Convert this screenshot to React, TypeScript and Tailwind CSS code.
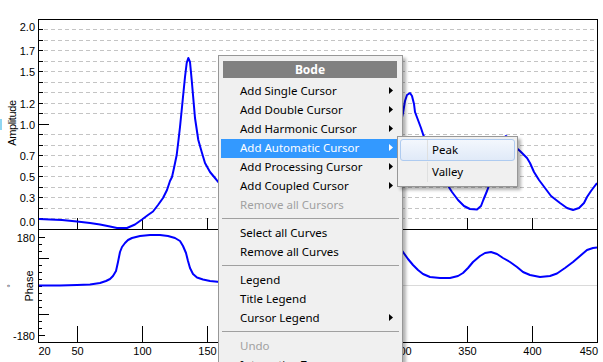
import React from 'react';

type Item = { label: string; sub?: boolean; active?: boolean; disabled?: boolean } | 'sep';

const MENU: Item[] = [
  { label: 'Add Single Cursor', sub: true },
  { label: 'Add Double Cursor', sub: true },
  { label: 'Add Harmonic Cursor', sub: true },
  { label: 'Add Automatic Cursor', sub: true, active: true },
  { label: 'Add Processing Cursor', sub: true },
  { label: 'Add Coupled Cursor', sub: true },
  { label: 'Remove all Cursors', disabled: true },
  'sep',
  { label: 'Select all Curves' },
  { label: 'Remove all Curves' },
  'sep',
  { label: 'Legend' },
  { label: 'Title Legend' },
  { label: 'Cursor Legend', sub: true },
  'sep',
  { label: 'Undo', disabled: true },
  { label: 'Interactive Zoom' },
];

// chart geometry (px)
const L = 38;
const R = 597;
const TOP = 19;
const MID = 229;
const BOT = 342;
const xOf = (v: number) => Math.round(L + (v - 20) * 1.3);

const AMP_GRID = Array.from({ length: 19 }, (_, i) => Math.round(29.3 + i * 10.5));
const AMP_LABELS: [string, number][] = [
  ['2.0', 26.5], ['1.7', 50.5], ['1.5', 71.5], ['1.2', 103.5], ['1.0', 124.5],
  ['0.7', 155.5], ['0.5', 176.5], ['0.3', 197.5], ['0.0', 222],
];
const PHASE_TICKS = Array.from({ length: 15 }, (_, i) => Math.round(237 + i * 7));
const X_TICKS = [50, 100, 150, 200, 250, 300, 350, 400];
// labels under the menu are hidden anyway
const X_LABELS = [50, 100, 150, 300, 350, 400];

const AMP_LEFT =
  '38,219 50,219.5 62,220 77,221.5 90,223 100,224.5 110,226.5 117,228 127,228 135,224.5 142,219.5 148,215 153,211.5 158,205 163,198 167,190 170,181 172,177 174,168 176.7,155 178.5,140 180,127 182.7,100 185,77 186.7,63 188.3,58 190,62 191.7,80 193,95 195,118 198.3,140 201.7,152 205,163 210,172 215,178 219,183';
const AMP_RIGHT =
  '398,135 403,113 405,101 407,95 410,93 412,96 414,104 415,112 418,120 421,128 423.3,135 430,150 437,165 445,181 452,192 458,200 464,206 470,209 477,209.5 481,206 483.3,200 487,191 490,183 493,172 497,157 500,145 503,138 506,136 509,138 513,145 520,151 527,158 530,163 534,172 539,180 545,188 551,196 560,203 567,208 573,210 579,208 584,203 587,197 591,191 594,187 597,183';
const PH_LEFT =
  '38,285.5 60,285.5 77,285 90,284.5 100,283 106,281 110,279 113,276 116,271 118,262 120,252 122,247 125,243 128,240 132,238 140,236 150,235 160,235 168,236 175,238 180,241 183,246 186,253 188,261 190,268 193,274 197,277.5 203,279.5 210,281 220,282';
const PH_RIGHT =
  '398,246 403,252 408,259 413,265 418,270 423,274 430,277 440,278 450,278 458,276 463,273 468,268 473,262 480,256 485,253 491,252 497,254 503,258 510,262 517,267 523,272 530,275 540,277 550,276 557,273.5 565,268 573,262 580,256 587,250 593,248 597,247.5';

function Arrow({ white }: { white?: boolean }) {
  return (
    <svg width="4" height="7" viewBox="0 0 4 7" className="shrink-0">
      <polygon points="0,0 4,3.5 0,7" fill={white ? '#ffffff' : '#000000'} />
    </svg>
  );
}

function Chart() {
  const axisFont = { fontFamily: '"Liberation Sans", Arial, sans-serif', fontSize: 11 };
  return (
    <svg width="603" height="362" className="block" shapeRendering="crispEdges">
      <defs>
        <clipPath id="amp">
          <rect x={L + 1} y={TOP + 1} width={R - L - 1} height={MID - TOP - 1} />
        </clipPath>
        <clipPath id="ph">
          <rect x={L + 1} y={MID + 1} width={R - L - 1} height={BOT - MID - 1} />
        </clipPath>
      </defs>

      {/* amplitude grid */}
      {AMP_GRID.filter((y) => y !== 124).map((y) => (
        <line key={y} x1={L + 6} x2={R} y1={y + 0.5} y2={y + 0.5} stroke="#c4c4c4" strokeDasharray="4 3" />
      ))}
      {AMP_GRID.map((y) => (
        <line key={'t' + y} x1={L} x2={y === 124 ? L + 11 : L + 5} y1={y + 0.5} y2={y + 0.5} stroke="#000" />
      ))}

      {/* phase zero line and ticks */}
      <line x1={L} x2={R} y1={285.5} y2={285.5} stroke="#dadada" />
      {PHASE_TICKS.map((y, i) => (
        <line
          key={'p' + y}
          x1={L}
          x2={i === 0 || i === 14 ? L + 7 : i === 3 || i === 11 ? L + 11 : L + 4}
          y1={y + 0.5}
          y2={y + 0.5}
          stroke="#000"
        />
      ))}

      {/* x ticks */}
      {X_TICKS.map((v) => (
        <g key={'x' + v}>
          <line x1={xOf(v) + 0.5} x2={xOf(v) + 0.5} y1={218} y2={MID} stroke="#000" />
          <line x1={xOf(v) + 0.5} x2={xOf(v) + 0.5} y1={326} y2={BOT} stroke="#000" />
        </g>
      ))}

      {/* frame */}
      <g stroke="#000">
        <line x1={L} x2={R + 1} y1={TOP + 0.5} y2={TOP + 0.5} />
        <line x1={L} x2={R + 1} y1={MID + 0.5} y2={MID + 0.5} />
        <line x1={L} x2={R + 1} y1={BOT + 0.5} y2={BOT + 0.5} />
        <line x1={L + 0.5} x2={L + 0.5} y1={TOP} y2={BOT + 1} />
        <line x1={R + 0.5} x2={R + 0.5} y1={TOP} y2={BOT + 1} />
      </g>

      {/* unit mark, mostly outside the view */}
      <rect x={0} y={119} width={2} height={11} fill="#8fd6f2" />

      {/* curves */}
      <g fill="none" stroke="#0000ff" strokeWidth="2" shapeRendering="auto" strokeLinejoin="round">
        <g clipPath="url(#amp)">
          <polyline points={AMP_LEFT} />
          <polyline points={AMP_RIGHT} />
        </g>
        <g clipPath="url(#ph)">
          <polyline points={PH_LEFT} />
          <polyline points={PH_RIGHT} />
        </g>
      </g>

      {/* labels */}
      <g style={axisFont} fill="#000" shapeRendering="auto">
        {AMP_LABELS.map(([t, y]) => (
          <text key={t} x={35} y={y} textAnchor="end" dominantBaseline="central">
            {t}
          </text>
        ))}
        <text x={35} y={237.5} textAnchor="end" dominantBaseline="central">180</text>
        <text x={35} y={336} textAnchor="end" dominantBaseline="central">-180</text>
        <text x={38.5} y={351} dominantBaseline="central">20</text>
        {X_LABELS.map((v) => (
          <text key={'l' + v} x={xOf(v) + 0.5} y={351} textAnchor="middle" dominantBaseline="central">
            {v}
          </text>
        ))}
        <text x={598} y={351} textAnchor="end" dominantBaseline="central">450</text>
        <text x={12} y={123} transform="rotate(-90 12 123)" textAnchor="middle" dominantBaseline="central" letterSpacing="-0.4">
          Amplitude
        </text>
        <text x={29} y={286} transform="rotate(-90 29 286)" textAnchor="middle" dominantBaseline="central">
          Phase
        </text>
        <text x={11} y={286} transform="rotate(-90 11 286)" textAnchor="middle" dominantBaseline="central" fontSize={9} fill="#445">
          °
        </text>
      </g>
    </svg>
  );
}

function ContextMenu() {
  return (
    <div className="absolute left-[218px] top-[55px] w-[185px] border border-[#979797] bg-[#f0f0f0] pl-[2px] pr-[3px] pt-[5px] text-[11.5px] text-black shadow-[3px_3px_3px_rgba(0,0,0,0.3)] font-['Noto_Sans',sans-serif]">
      <div className="mx-[2px] h-[17px] bg-[#808080] text-center text-[12px] font-bold leading-[17px] text-white">Bode</div>
      <div className="mt-[4px]">
        {MENU.map((it, i) =>
          it === 'sep' ? (
            <div key={i} className="h-[9px] pt-[3px]">
              <div className="ml-[1px] h-px bg-[#a0a0a0]" />
            </div>
          ) : (
            <div
              key={i}
              className={
                'mr-[1px] flex h-[19px] items-center justify-between pb-[2px] pl-[19px] pr-[5px] leading-[17px] ' +
                (it.active ? 'bg-[#3399ff] text-white' : it.disabled ? 'text-[#a0a0a0]' : '')
              }
            >
              <span>{it.label}</span>
              {it.sub && <Arrow white={it.active} />}
            </div>
          ),
        )}
      </div>
    </div>
  );
}

function SubMenu() {
  const rows = [
    { label: 'Peak', hot: true },
    { label: 'Valley', hot: false },
  ];
  return (
    <div className="absolute left-[397px] top-[136px] w-[121px] border border-[#979797] bg-[#f0f0f0] px-[2px] pt-[2px] pb-[3px] text-[11.5px] text-black shadow-[3px_3px_3px_rgba(0,0,0,0.3)] font-['Noto_Sans',sans-serif]">
      {rows.map((r) => (
        <div
          key={r.label}
          className={
            'flex h-[22px] items-stretch rounded-[3px] border ' +
            (r.hot ? 'border-[#aecbf0] bg-linear-to-b from-[#f3f7fd] to-[#e0eaf8]' : 'border-transparent')
          }
        >
          <div className="w-[26px] shrink-0" />
          <div className="flex items-center border-l border-[#dfe0e0] pb-[1px] pl-[4px]">
            <span>{r.label}</span>
          </div>
        </div>
      ))}
    </div>
  );
}

export default function App() {
  return (
    <div className="relative h-[362px] w-[603px] overflow-hidden bg-white">
      <Chart />
      <ContextMenu />
      <SubMenu />
    </div>
  );
}
